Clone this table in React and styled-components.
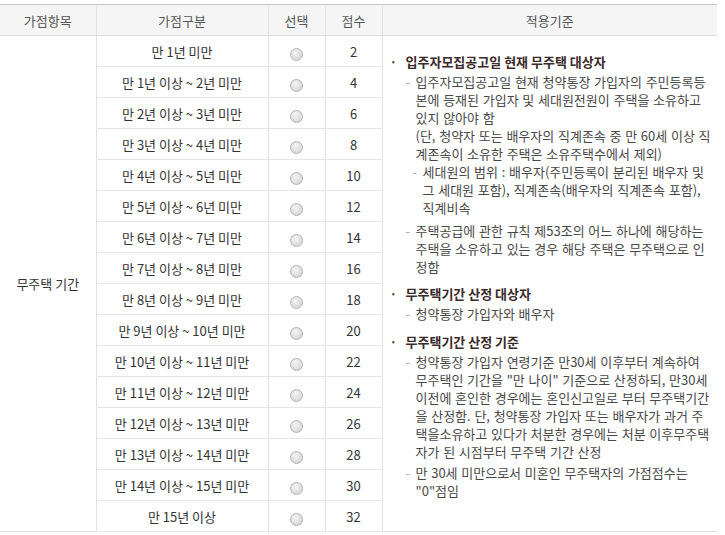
import React from "react";
import styled, { createGlobalStyle } from "styled-components";

const GlobalStyle = createGlobalStyle`
  html, body {
    margin: 0;
    padding: 0;
    background: #fff;
  }
  body {
    font-family: "Noto Sans CJK KR", "Noto Sans", sans-serif;
    font-size: 13px;
    color: #333;
  }
`;

const Wrap = styled.div`
  padding-top: 4px;
  width: 717px;
`;

const Table = styled.table`
  width: 717px;
  border-collapse: collapse;
  table-layout: fixed;
  border-top: 1px solid #c4c4c4;
  border-bottom: 1px solid #dcdcdc;
`;

const Th = styled.th`
  height: 30px;
  padding: 0;
  background: #f5f5f5;
  color: #555;
  font-weight: normal;
  text-align: center;
  border-bottom: 1px solid #dcdcdc;
  border-right: ${(p) => (p.$last ? "none" : "1px solid #e2e2e2")};
`;

const Td = styled.td`
  height: 30px;
  padding: 0;
  text-align: center;
  vertical-align: middle;
  color: #333;
  border-bottom: 1px solid #e6e6e6;
  border-right: 1px solid #e2e2e2;
`;

const GroupCell = styled.td`
  padding: 0;
  text-align: center;
  vertical-align: middle;
  color: #333;
  border-right: 1px solid #e2e2e2;
`;

const RuleCell = styled.td`
  padding: 16px 0 0 7px;
  vertical-align: top;
  text-align: left;
`;

const Radio = styled.span`
  display: inline-block;
  width: 11px;
  height: 11px;
  margin-top: 3px;
  border-radius: 50%;
  border: 1px solid #b4b4b4;
  background: radial-gradient(circle at 40% 35%, #f4f4f4 0%, #dadada 70%, #cfcfcf 100%);
  vertical-align: middle;
`;

const Section = styled.div`
  margin-top: ${(p) => p.$gap || 0}px;
`;

const Heading = styled.div`
  display: flex;
  line-height: 20px;
  margin-bottom: 1px;
  font-size: 13px;
  font-weight: bold;
  color: #3b2a2a;
`;

const Bullet = styled.span`
  width: 16px;
  flex: none;
  color: #555;
`;

const Item = styled.div`
  display: flex;
  margin: ${(p) => p.$gap || 0}px 0 0 ${(p) => p.$indent || 16}px;
  line-height: 18px;
  color: #484848;
  word-spacing: 0.8px;
  white-space: nowrap;
`;

const Dash = styled.span`
  width: 10px;
  flex: none;
  color: #aaa;
`;

const Lines = styled.div`
  display: flex;
  flex-direction: column;
`;

const rows = [
  ["만 1년 미만", 2],
  ["만 1년 이상 ~ 2년 미만", 4],
  ["만 2년 이상 ~ 3년 미만", 6],
  ["만 3년 이상 ~ 4년 미만", 8],
  ["만 4년 이상 ~ 5년 미만", 10],
  ["만 5년 이상 ~ 6년 미만", 12],
  ["만 6년 이상 ~ 7년 미만", 14],
  ["만 7년 이상 ~ 8년 미만", 16],
  ["만 8년 이상 ~ 9년 미만", 18],
  ["만 9년 이상 ~ 10년 미만", 20],
  ["만 10년 이상 ~ 11년 미만", 22],
  ["만 11년 이상 ~ 12년 미만", 24],
  ["만 12년 이상 ~ 13년 미만", 26],
  ["만 13년 이상 ~ 14년 미만", 28],
  ["만 14년 이상 ~ 15년 미만", 30],
  ["만 15년 이상", 32],
];

const Entry = ({ lines, gap, indent, children }) => (
  <Item $gap={gap} $indent={indent}>
    <Dash>-</Dash>
    <Lines>
      {lines.map((l) => (
        <span key={l}>{l}</span>
      ))}
      {children}
    </Lines>
  </Item>
);

const Rules = () => (
  <>
    <Section>
      <Heading>
        <Bullet>·</Bullet>입주자모집공고일 현재 무주택 대상자
      </Heading>
      <Entry
        lines={[
          "입주자모집공고일 현재 청약통장 가입자의 주민등록등",
          "본에 등재된 가입자 및 세대원전원이 주택을 소유하고",
          "있지 않아야 함",
          "(단, 청약자 또는 배우자의 직계존속 중 만 60세 이상 직",
          "계존속이 소유한 주택은 소유주택수에서 제외)",
        ]}
      >
        <Entry
          indent={-3}
          lines={[
            "세대원의 범위 : 배우자(주민등록이 분리된 배우자 및",
            "그 세대원 포함), 직계존속(배우자의 직계존속 포함),",
            "직계비속",
          ]}
        />
      </Entry>
      <Entry
        gap={5}
        lines={[
          "주택공급에 관한 규칙 제53조의 어느 하나에 해당하는",
          "주택을 소유하고 있는 경우 해당 주택은 무주택으로 인",
          "정함",
        ]}
      />
    </Section>
    <Section $gap={8}>
      <Heading>
        <Bullet>·</Bullet>무주택기간 산정 대상자
      </Heading>
      <Entry lines={["청약통장 가입자와 배우자"]} />
    </Section>
    <Section $gap={9}>
      <Heading>
        <Bullet>·</Bullet>무주택기간 산정 기준
      </Heading>
      <Entry
        lines={[
          "청약통장 가입자 연령기준 만30세 이후부터 계속하여",
          "무주택인 기간을 \"만 나이\" 기준으로 산정하되, 만30세",
          "이전에 혼인한 경우에는 혼인신고일로 부터 무주택기간",
          "을 산정함. 단, 청약통장 가입자 또는 배우자가 과거 주",
          "택을소유하고 있다가 처분한 경우에는 처분 이후무주택",
          "자가 된 시점부터 무주택 기간 산정",
        ]}
      />
      <Entry
        gap={3}
        lines={["만 30세 미만으로서 미혼인 무주택자의 가점점수는", "\"0\"점임"]}
      />
    </Section>
  </>
);

const App = () => (
  <Wrap>
    <GlobalStyle />
    <Table>
      <colgroup>
        <col style={{ width: 96 }} />
        <col style={{ width: 172 }} />
        <col style={{ width: 57 }} />
        <col style={{ width: 57 }} />
        <col />
      </colgroup>
      <thead>
        <tr>
          <Th>가점항목</Th>
          <Th>가점구분</Th>
          <Th>선택</Th>
          <Th>점수</Th>
          <Th $last>적용기준</Th>
        </tr>
      </thead>
      <tbody>
        {rows.map(([label, score], i) => (
          <tr key={label}>
            {i === 0 && <GroupCell rowSpan={rows.length}>무주택 기간</GroupCell>}
            <Td>{label}</Td>
            <Td>
              <Radio />
            </Td>
            <Td>{score}</Td>
            {i === 0 && (
              <RuleCell rowSpan={rows.length}>
                <Rules />
              </RuleCell>
            )}
          </tr>
        ))}
      </tbody>
    </Table>
  </Wrap>
);

export default App;
